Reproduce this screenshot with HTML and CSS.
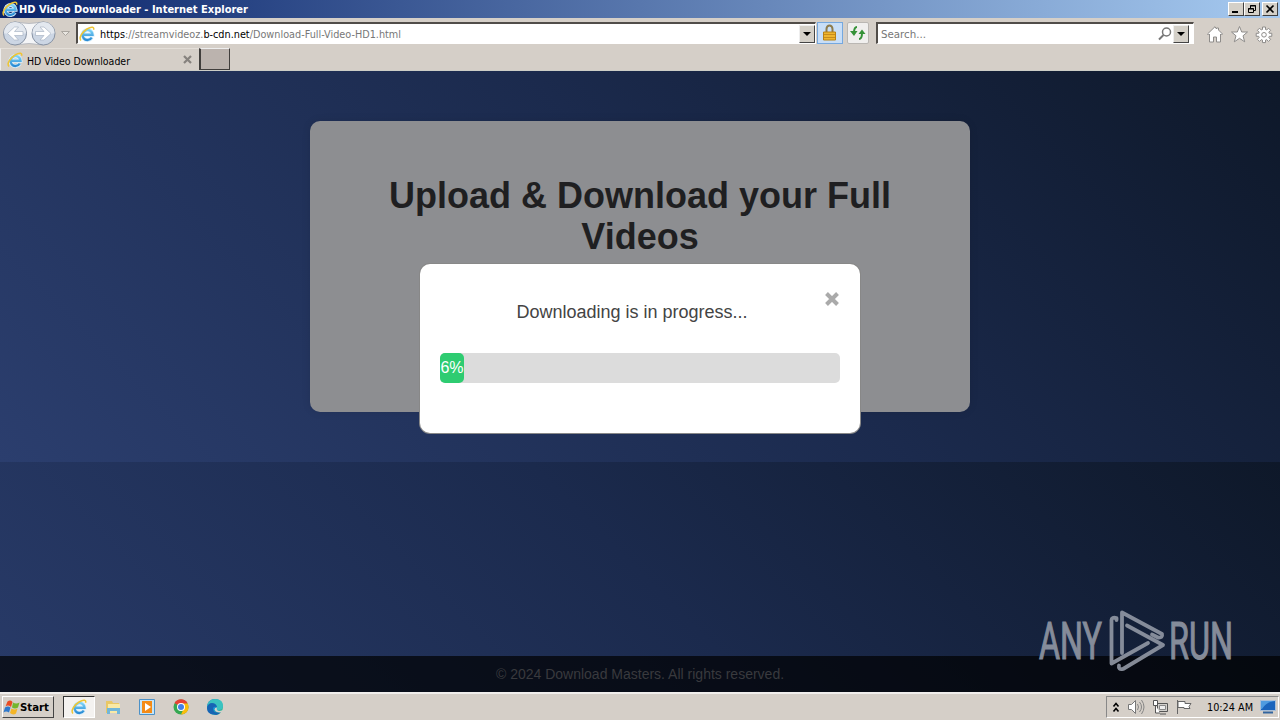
FILE: index.html
```html
<!DOCTYPE html>
<html lang="en">
  <head>
    <meta charset="UTF-8" />
    <title>HD Video Downloader</title>
    <link rel="stylesheet" href="styles.css" />
  </head>
  <body>
    <svg class="defs" width="0" height="0">
      <defs>
        <linearGradient id="blue" x1="0" y1="0" x2="0" y2="1">
          <stop offset="0" stop-color="#7cd3f8" />
          <stop offset="1" stop-color="#2a8bd4" />
        </linearGradient>
        <linearGradient id="edge" x1="0" y1="0" x2="1" y2="1">
          <stop offset="0" stop-color="#0b5fb4" />
          <stop offset="0.5" stop-color="#1593d8" />
          <stop offset="1" stop-color="#45cf70" />
        </linearGradient>
        <symbol id="ie" viewBox="0 0 16 16">
          <path d="M4.500 8.800H13.500A5 5 0 1 0 12.800 11.500" fill="none" stroke="#d9effb" stroke-width="4" />
          <path d="M4.500 8.800H13.500A5 5 0 1 0 12.800 11.500" fill="none" stroke="url(#blue)" stroke-width="2.400" />
          <path d="M2 14.500C-.5 12 3 6 8 3s7.500-2 6.500.8" fill="none" stroke="#efc534" stroke-width="1.500" />
        </symbol>
      </defs>
    </svg>

    <header class="browser">
      <div class="titlebar">
        <svg class="icon"><use href="#ie" /></svg>
        <svg class="titlebar__text" width="232" height="18"><text x="0" y="13" textLength="229" lengthAdjust="spacingAndGlyphs">HD Video Downloader - Internet Explorer</text></svg>
        <div class="titlebar__buttons">
          <span class="btn"><svg width="12" height="10"><path d="M2 8h6" stroke="#000" stroke-width="2" /></svg></span>
          <span class="btn"><svg width="12" height="10"><path d="M4.500 4V1.500h5v5H8M4 2h6M2.500 4.500h5v4h-5zM2 5h6" fill="none" stroke="#000" /></svg></span>
          <span class="btn btn--close"><svg width="12" height="10"><path d="M2.500 1.500l7 7m0-7l-7 7" stroke="#000" stroke-width="1.700" /></svg></span>
        </div>
      </div>

      <div class="toolbar">
        <svg class="nav" width="76" height="27" viewBox="0 0 76 27">
          <path d="M15 2Q29 5 43 2A12 12 0 0 1 43 25Q29 22 15 25A12 12 0 0 1 15 2" fill="#f4f5f7" stroke="#b9bcc2" />
          <circle cx="15" cy="13.500" r="11.500" fill="#ccd6e4" stroke="#8792a3" />
          <circle cx="43.500" cy="13.500" r="11.500" fill="#ccd6e4" stroke="#8792a3" />
          <path d="M4 13a11 11 0 0 1 22 0q-11 4-22 0zM32.500 13a11 11 0 0 1 22 0q-11 4-22 0z" fill="#e3e8ef" />
          <path d="M23 11.500h-8.500l4-4.500h-4L7.500 13.500l7 6.500h4l-4-4.500H23zM35.500 11.500H44l-4-4.500h4l7 6.500-7 6.500h-4l4-4.500h-8.500z" fill="#fff" stroke="#a9b4c4" stroke-width=".7" />
          <path d="M61.500 11.500h8l-4 4z" fill="#e9e6e1" stroke="#aaa6a0" />
        </svg>
        <div class="address">
          <svg class="icon"><use href="#ie" /></svg>
          <svg class="address__url" width="304" height="18"><text x="0" y="13" textLength="301" lengthAdjust="spacingAndGlyphs"><tspan class="dark">https</tspan>://streamvideoz.<tspan class="dark">b-cdn.net</tspan>/Download-Full-Video-HD1.html</text></svg>
          <span class="drop"><i></i></span>
        </div>
        <span class="lock"><svg width="16" height="18"><path d="M4.500 8V5a3 3.500 0 0 1 6 0v3" fill="none" stroke="#8d7b4c" stroke-width="2" /><path d="M1.500 8h12v8h-12z" fill="#efb52e" stroke="#b98113" /><path d="M2 10.500h11M2 13.500h11" stroke="#c78c1c" /></svg></span>
        <span class="refresh"><svg width="18" height="18"><path d="M8 3Q5 3 5 9M10 15q3 0 3-6" fill="none" stroke="#359238" stroke-width="2" /><path d="M1 7h7.500l-3.500 5zM9.500 10h7L13 5.500z" fill="#359238" /></svg></span>
        <div class="search">
          <svg class="search__text" width="50" height="18"><text x="0" y="13" textLength="45" lengthAdjust="spacingAndGlyphs">Search...</text></svg>
          <svg class="search__glass" width="14" height="14"><circle cx="8.500" cy="5" r="4" fill="none" stroke="#777" stroke-width="1.500" /><path d="M5.500 8L1 12.500" stroke="#777" stroke-width="2" /></svg>
          <span class="drop"><i></i></span>
        </div>
        <svg class="tools" width="70" height="20" viewBox="0 0 70 20">
          <g fill="#fff" stroke="#8e8c8a">
            <path d="M3.500 9v8h4v-5h3v5h4V9l1 1 1-1-4-4V3h-2v1L9 1.700 1.500 9l1 1z" />
            <path d="M33.500 1.500l2.200 5.500h5.800l-4.500 3.800 1.700 6-5.200-3.500-5.200 3.500 1.700-6L25.500 7h5.800z" />
            <path d="M56.500 4.500v-2.500h3v2.500l1.200.5 1.800-1.800 2.100 2.100-1.800 1.800.5 1.200h2.500v3h-2.500l-.5 1.200 1.800 1.800-2.100 2.100-1.800-1.800-1.200.5v2.500h-3v-2.500l-1.200-.5-1.800 1.800-2.100-2.100 1.800-1.800-.5-1.200h-2.500v-3h2.500l.5-1.200-1.800-1.800 2.100-2.100 1.800 1.800z" />
            <circle cx="58" cy="9.800" r="2.300" />
          </g>
        </svg>
      </div>

      <div class="tabs">
        <div class="tab">
          <svg class="icon"><use href="#ie" /></svg>
          <svg class="tab__text" width="112" height="18"><text x="0" y="14" textLength="103" lengthAdjust="spacingAndGlyphs">HD Video Downloader</text></svg>
          <svg class="tab__close" width="9" height="9"><path d="M1 1l7 7m0-7L1 8" stroke="#86827e" stroke-width="2.200" /></svg>
        </div>
        <div class="tab-new"></div>
      </div>
    </header>

    <main class="page">
      <section class="upload">
        <h1>Upload &amp; Download your Full Videos</h1>
      </section>
      <section class="modal">
        <span class="modal__close"><svg width="16" height="14"><path d="M2.500 1.500l11 11m0-11l-11 11" stroke="#aaa" stroke-width="4" /></svg></span>
        <p class="modal__text">Downloading is in progress...</p>
        <div class="progress"><div class="progress__bar">6%</div></div>
      </section>
      <footer class="footer">© 2024 Download Masters. All rights reserved.</footer>
      <svg class="watermark" width="210" height="74" viewBox="0 0 210 74">
        <text x="3" y="53" textLength="63" lengthAdjust="spacingAndGlyphs">ANY</text>
        <text x="133" y="53" textLength="64" lengthAdjust="spacingAndGlyphs">RUN</text>
        <g fill="none" stroke="#9298a5" stroke-width="3.800" stroke-linecap="round" stroke-linejoin="round">
          <path d="M86 47V6.500L126 28q1 4-4 3.500l-6-3" />
          <path d="M91 19.500L127 39 87 63q-5 1-4-3.500" />
          <path d="M80.500 14v-2q-5-1-5 2v43.500L112 37" />
        </g>
      </svg>
    </main>

    <footer class="taskbar">
      <div class="start">
        <svg width="17" height="16"><path d="M4.500 2.500q3-2 5 .5L8 8Q5 5.500 2.500 7.500z" fill="#e94b22" /><path d="M10 3.500q3 2 6.500 0L15 8.500q-3 2-6 0z" fill="#74b62e" /><path d="M2 8.500q3-2 5.500 0L6 13.500q-3-2-5.500 0z" fill="#2e78cb" /><path d="M8.500 9.500q3 2 6 0l-1.500 5q-3 2-6-.5z" fill="#f4b526" /></svg>
        <svg width="34" height="18"><text x="0" y="13" textLength="29" lengthAdjust="spacingAndGlyphs">Start</text></svg>
      </div>
      <div class="apps">
        <span class="app app--active"><svg class="icon"><use href="#ie" /></svg></span>
        <span class="app"><svg width="16" height="16"><path d="M1 2h6l1 2h6v10H1z" fill="#e9c765" /><path d="M3 5h12v9H3z" fill="#f9e9a5" /><path d="M2 15V9h13v6h-3v-3H5v3z" fill="#72b6d9" /></svg></span>
        <span class="app"><svg width="16" height="16"><path d="M.5.500h15v15H.5z" fill="#c5e5f8" stroke="#4c91c7" /><path d="M3 2h10v12H3z" fill="#f48b16" /><path d="M6 4l6 4-6 4z" fill="#fff" /></svg></span>
        <span class="app"><svg width="16" height="16"><circle cx="8" cy="8" r="7.500" fill="#36a852" /><path d="M8 8L1.500 4a7.500 7.500 0 0 1 13 0z" fill="#e64235" /><path d="M8 8V4.500h6.700A7.500 7.500 0 0 1 8 15.500L11 9z" fill="#fbbd0b" /><circle cx="8" cy="8" r="4" fill="#fff" /><circle cx="8" cy="8" r="3" fill="#4380e8" /></svg></span>
        <span class="app"><svg width="16" height="16"><circle cx="8" cy="8" r="8" fill="url(#edge)" /><path d="M0 8Q1 0 8 0q8 0 8 7 0 4-5 4-2 0-1-2 0-4-5-4-4 0-5 3z" fill="#3ac3c0" /><path d="M0 9q1-5 5-5 4 0 5 4-3-1-4 1 0 6 8 4-3 4-7 2.500Q0 15 0 9z" fill="#1765b4" /><path d="M10 8.500q-1 3 2 3.500 2 0 4-1l-1.500 2.500q-6 .5-7-3 0-2 2.500-2z" fill="#d6d2cc" /></svg></span>
      </div>
      <div class="tray">
        <svg width="8" height="11"><path d="M1.500 4.500l2.500-3 2.500 3m-5 5l2.500-3 2.500 3" fill="none" stroke="#000" stroke-width="1.600" /></svg>
        <svg width="18" height="16"><path d="M1.500 5.500h3l4-4v13l-4-4h-3z" fill="#fff" stroke="#777" /><path d="M10.500 5q2 3 0 6m2-8q4 5 0 10m2-12q5 7 0 14" fill="none" stroke="#858585" /></svg>
        <svg width="17" height="16"><path d="M5.500 4.500h10v8h-10zM8 15h6" fill="#d3d1cd" stroke="#555" /><path d="M7.500 6.500h6v4h-6z" fill="#eee" stroke="#888" /><path d="M1.500 1.500h4v5h-4zM3.500 6v8H8" fill="#fff" stroke="#555" /></svg>
        <svg width="17" height="16"><path d="M1.500 1v14M2 2.500h7v2h6l-2 3 1 2H8v-1H2z" fill="#fff" stroke="#666" /></svg>
        <svg class="clock" width="46" height="18"><text x="0" y="13" textLength="46" lengthAdjust="spacingAndGlyphs">10:24 AM</text></svg>
        <svg width="16" height="14"><path d="M.5.500h15v10H.5z" fill="#1b64bc" stroke="#a8bfd9" /><path d="M1 1h14Q6 2 2 9H1z" fill="#4f9be0" /><path d="M3 12.500h10" stroke="#32659f" stroke-width="2" /></svg>
      </div>
    </footer>
  </body>
</html>
```
FILE: styles.css
```css
* {
  box-sizing: border-box;
}
body {
  margin: 0;
  width: 1280px;
  height: 720px;
  overflow: hidden;
  display: flex;
  flex-direction: column;
  font-family: "Liberation Sans", Arial, sans-serif;
}
svg {
  display: block;
  flex: none;
  overflow: visible;
}
.defs {
  position: absolute;
}
.icon {
  width: 16px;
  height: 16px;
}
.browser {
  height: 71px;
  background: #d5cfc8;
  border-bottom: 1px solid #cccdc6;
}
.browser text,
.taskbar text {
  font-family: "DejaVu Sans Condensed", "DejaVu Sans", sans-serif;
  font-size: 11px;
}

.titlebar {
  height: 18px;
  display: flex;
  align-items: center;
  padding: 0 2px;
  background: linear-gradient(to right, #0a246a, #a6caf0);
}
.titlebar__text text {
  fill: #fff;
  font-weight: bold;
}
.titlebar__text {
  margin-left: 1px;
}
.titlebar__buttons {
  display: flex;
  margin-left: auto;
}
.btn {
  width: 16px;
  height: 14px;
  padding: 1px;
  background: #d4d0c8;
  border: 1px solid;
  border-color: #fff #404040 #404040 #fff;
}
.btn--close {
  margin-left: 2px;
}

.toolbar {
  height: 30px;
  display: flex;
  align-items: center;
}
.nav {
  width: 76px;
}
.address,
.search {
  height: 22px;
  display: flex;
  align-items: center;
  background: #fff;
  border: 1px solid #fff;
  border-top: 2px solid #514d49;
  border-left: 2px solid #514d49;
}
.address {
  width: 740px;
  padding-left: 1px;
}
.address__url {
  margin-left: 5px;
}
.address__url text {
  fill: #777;
}
.address__url .dark {
  fill: #000;
}
.drop {
  width: 16px;
  height: 18px;
  margin-left: auto;
  display: flex;
  align-items: center;
  justify-content: center;
  background: #d4d0c8;
  border: 1px solid;
  border-color: #eee #444 #444 #eee;
}
.drop i {
  border: 4px solid transparent;
  border-top-color: #000;
  border-bottom: 0;
}
.lock,
.refresh {
  height: 22px;
  display: flex;
  align-items: center;
  justify-content: center;
}
.lock {
  width: 26px;
  margin-left: 1px;
  background: #c8def7;
  border: 1px solid #75a8df;
}
.refresh {
  width: 22px;
  margin-left: 4px;
  background: #f0efee;
  border: 1px solid #bab7b3;
  border-radius: 2px;
}
.search {
  width: 318px;
  margin-left: 7px;
  padding-left: 3px;
  padding-right: 4px;
}
.search text {
  fill: #777;
}
.search__glass {
  margin-left: auto;
}
.search .drop {
  margin-left: 1px;
}
.tools {
  margin: 3px 0 0 12px;
}

.tabs {
  height: 22px;
  display: flex;
}
.tab {
  width: 199px;
  display: flex;
  align-items: center;
  padding: 0 7px 0 6px;
  border-left: 1px solid #eee;
  border-top: 1px solid #e4dfd9;
}
.tab__text {
  margin-left: 4px;
}
.tab__close {
  margin-left: auto;
}
.tab-new {
  width: 31px;
  background: #bbb3ae;
  border: 1px solid #403e3c;
  border-top-color: #eee;
  border-left-width: 2px;
}

.page {
  position: relative;
  height: 621px;
  display: flex;
  flex-direction: column;
  align-items: center;
  padding-top: 50px;
  background: linear-gradient(45deg, #2b3e6e, #1b2a4d 55%, #0e1829) 0 0 / 100% 391px;
}
.upload {
  width: 660px;
  height: 291px;
  padding: 54px 50px;
  border-radius: 10px;
  background: #8d8e91;
  box-shadow: 0 0 8px rgba(0, 0, 0, 0.1);
}
h1 {
  margin: 0;
  text-align: center;
  font-size: 36px;
  line-height: 41px;
  color: #1f1f21;
}
.modal {
  position: absolute;
  top: 193px;
  left: 420px;
  width: 440px;
  height: 169px;
  padding: 20px;
  background: #fff;
  border-radius: 10px;
  box-shadow: 0 0 0 1px #888;
}
.modal__close {
  float: right;
  padding-top: 8px;
}
.modal__text {
  margin: 17px 0 0;
  text-align: center;
  font-size: 18px;
  line-height: 22px;
  color: #444;
}
.progress {
  clear: both;
  height: 30px;
  margin-top: 30px;
  background: #dcdcdc;
  border-radius: 5px;
}
.progress__bar {
  width: 6%;
  height: 30px;
  text-align: center;
  font-size: 16px;
  line-height: 30px;
  color: #fff;
  background: #2ecc71;
  border-radius: 5px;
}
.footer {
  width: 100%;
  height: 36px;
  margin-top: auto;
  text-align: center;
  font-size: 14px;
  line-height: 36px;
  color: #393a3e;
  background: rgba(0, 0, 0, 0.7);
}
.watermark {
  position: absolute;
  left: 1036px;
  top: 535px;
  opacity: 0.9;
}
.watermark text {
  font: 52px Roboto, sans-serif;
  fill: #9298a5;
  stroke: #9298a5;
  stroke-width: 1.2px;
}

.taskbar {
  height: 28px;
  display: flex;
  align-items: center;
  background: #d5cfc8;
  border-top: 2px solid #f0eeec;
}
.start {
  width: 52px;
  height: 22px;
  margin-left: 2px;
  display: flex;
  align-items: center;
  border: 1px solid;
  border-color: #fff #444 #444 #fff;
}
.start text {
  font-weight: bold;
}
.apps {
  display: flex;
  margin-left: 9px;
}
.app {
  width: 34px;
  height: 22px;
  display: flex;
  align-items: center;
  justify-content: center;
}
.app--active {
  width: 32px;
  margin-right: 1px;
  background: #f4f2f0;
  border: 1px solid;
  border-color: #333 #fff #fff #333;
}
.tray {
  width: 173px;
  height: 22px;
  margin-left: auto;
  margin-right: 1px;
  padding: 0 3px 0 5px;
  display: flex;
  align-items: center;
  gap: 7px;
  border: 1px solid;
  border-color: #888 #fff #fff #888;
}
.clock {
  margin-left: 7px;
}
```
